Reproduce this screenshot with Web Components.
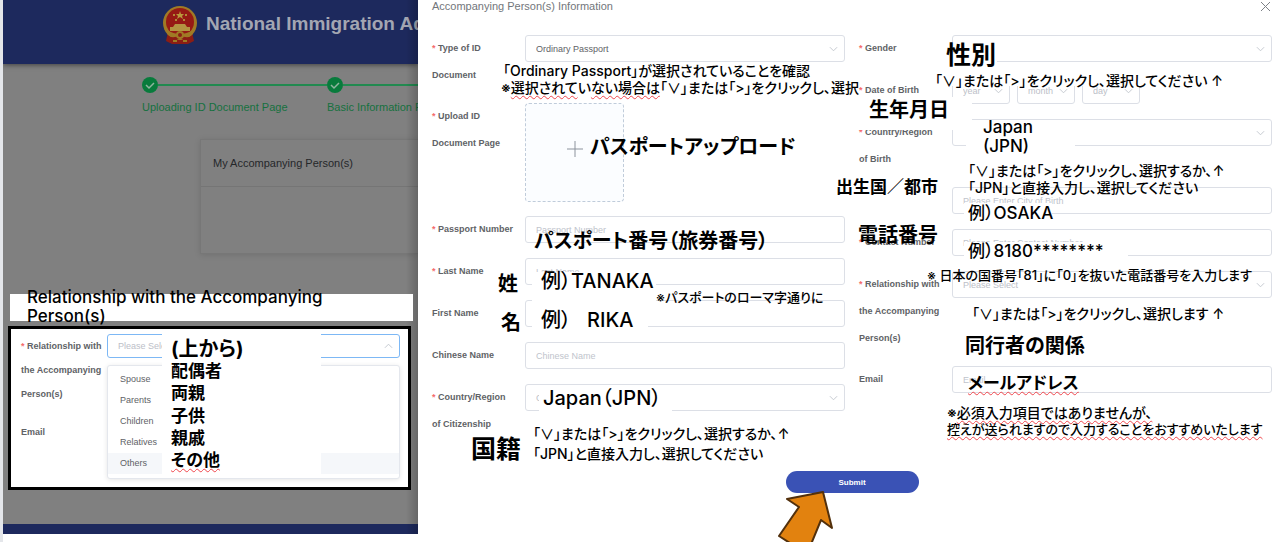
<!DOCTYPE html>
<html lang="ja">
<head>
<meta charset="utf-8">
<title>Accompanying Person(s) Information</title>
<style>
    * { box-sizing: border-box; }
    body {
        margin: 0;
        background: #fff;
        font-family: "Liberation Sans", Arial, sans-serif;
    }
</style>
</head>
<body>
<guide-page></guide-page>

<script>
    const baseStyle = `
        * { box-sizing: border-box; }
        :host { display: block; }
        :host([hidden]) { display: none; }
    `;

    // handwritten style remark laid over the form
    class HandNote extends HTMLElement {
        constructor() {
            super();
            this.attachShadow({ mode: 'open' });
        }
        connectedCallback() {
            this.shadowRoot.innerHTML = `
                <style>
                    ${baseStyle}
                    :host {
                        position: absolute;
                        font-family: Inter, "Noto Sans CJK JP", sans-serif;
                        font-feature-settings: "palt";
                        font-size: 14px;
                        font-weight: 500;
                        line-height: 24px;
                        color: #000;
                        white-space: nowrap;
                    }
                    :host([size="xs"]) { font-size: 13px; }
                    :host([size="m"]) { font-size: 17px; }
                    :host([size="l"]) { font-size: 20px; }
                    :host([size="xl"]) { font-size: 25px; }
                    :host([bold]) { font-weight: 700; }
                    ::slotted(u) {
                        text-decoration: underline wavy #f0464c 1px;
                        text-underline-offset: 2px;
                        text-decoration-skip-ink: none;
                    }
                </style>
                <slot></slot>
            `;
        }
    }
    customElements.define('hand-note', HandNote);

    // white box that hides what is under a remark
    class NotePatch extends HTMLElement {
        constructor() {
            super();
            this.attachShadow({ mode: 'open' });
            this.shadowRoot.innerHTML = `
                <style>
                    :host { display: block; position: absolute; background: #fff; }
                </style>
            `;
        }
    }
    customElements.define('note-patch', NotePatch);

    class FormField extends HTMLElement {
        constructor() {
            super();
            this.attachShadow({ mode: 'open' });
        }
        connectedCallback() {
            const label = this.getAttribute('label');
            const type = this.getAttribute('type') || 'text';
            const hint = this.getAttribute('hint') || '';
            const value = this.getAttribute('value') || '';
            const star = this.hasAttribute('required') ? '<i>*</i> ' : '';
            const arrow = '<svg viewBox="0 0 10 6"><path d="M1 1l4 4 4-4"/></svg>';
            let control = '';

            if (type === 'select') {
                control = `
                    <div class="box">
                        <select id="ctl" class="${value ? 'filled' : ''}"><option>${value || hint}</option></select>
                        ${arrow}
                    </div>`;
            } else if (type === 'date') {
                control = '<div class="dates">' + ['year', 'month', 'day'].map((part, i) => `
                    <div class="box">
                        <select ${i === 0 ? 'id="ctl"' : ''} aria-label="${part}"><option>${part}</option></select>
                        ${arrow}
                    </div>`).join('') + '</div>';
            } else if (type === 'upload') {
                control = `
                    <button id="ctl" class="upload" type="button" aria-label="Upload">
                        <svg viewBox="0 0 16 16"><path d="M8 0v16M0 8h16"/></svg>
                    </button>`;
            } else {
                control = `<input id="ctl" type="text" placeholder="${hint}">`;
            }

            this.shadowRoot.innerHTML = `
                <style>
                    ${baseStyle}
                    :host {
                        display: grid;
                        grid-template-columns: var(--label-width, 93px) minmax(0, 1fr);
                        min-height: 28px;
                        align-items: start;
                    }
                    label {
                        font-size: 9px;
                        font-weight: 700;
                        line-height: var(--label-line, 27px);
                        color: #606266;
                        white-space: pre-line;
                    }
                    i { color: #f56c6c; font-style: normal; }
                    input, select {
                        display: block;
                        width: 100%;
                        height: var(--control-height, 27px);
                        padding: 0 10px;
                        font: 9px "Liberation Sans", Arial, sans-serif;
                        color: #606266;
                        background: #fff;
                        border: 1px solid var(--control-border, #dcdfe6);
                        border-radius: 3px;
                        outline: none;
                        appearance: none;
                    }
                    select { color: #bcc0c8; }
                    select.filled { color: #606266; }
                    ::placeholder { color: #c0c4cc; }
                    .box { position: relative; }
                    .box svg {
                        position: absolute;
                        right: 7px;
                        top: calc(50% - 3px);
                        width: 9px;
                        height: 6px;
                        transform: var(--arrow-turn, none);
                    }
                    svg path { fill: none; stroke: #c0c4cc; }
                    .dates {
                        display: grid;
                        grid-template-columns: repeat(3, 58px);
                        gap: 7px;
                    }
                    .upload {
                        display: grid;
                        place-items: center;
                        width: 99px;
                        height: 99px;
                        padding: 0 0 8px;
                        background: #fbfdff;
                        border: 1px dashed #c0ccda;
                        border-radius: 4px;
                    }
                    .upload svg { width: 16px; height: 16px; }
                    .upload path { stroke: #8c939d; }
                </style>
                <label for="ctl">${star}${label}</label>
                ${control}
            `;
        }
    }
    customElements.define('form-field', FormField);

    // the dimmed page behind the drawer
    class SitePage extends HTMLElement {
        constructor() {
            super();
            this.attachShadow({ mode: 'open' });
        }
        connectedCallback() {
            const tick = '<svg class="tick" viewBox="0 0 16 16"><circle cx="8" cy="8" r="8"/><path d="M4 8l3 3 5-5"/></svg>';
            this.shadowRoot.innerHTML = `
                <style>
                    ${baseStyle}
                    :host {
                        display: flex;
                        flex-direction: column;
                        min-height: 534px;
                        background: #808080;
                        overflow: hidden;
                        position: relative;
                    }
                    :host::after {
                        content: "";
                        position: absolute;
                        inset: 0 0 0 auto;
                        width: 12px;
                        background: linear-gradient(to right, transparent, rgba(0, 0, 0, 0.2));
                    }
                    header {
                        display: flex;
                        align-items: flex-start;
                        gap: 8px;
                        height: 64px;
                        padding: 5px 0 0 159px;
                        background: #1d295d;
                        box-shadow: 0 1px 5px rgba(0, 0, 0, 0.5);
                        white-space: nowrap;
                    }
                    header svg { width: 36px; height: 39px; flex: none; }
                    h1 {
                        margin: 0;
                        font-size: 19px;
                        line-height: 38px;
                        color: #a3a6b2;
                    }
                    ol {
                        display: flex;
                        margin: 0;
                        padding: 13px 0 0 139px;
                        list-style: none;
                    }
                    li {
                        flex: 0 0 185px;
                        font-size: 11px;
                        line-height: 16px;
                        color: #16713f;
                        white-space: nowrap;
                    }
                    .bar { display: flex; align-items: center; margin-bottom: 6px; }
                    .bar::after { content: ""; flex: 1; height: 2px; background: #228a50; }
                    .tick { width: 16px; height: 16px; }
                    .tick circle { fill: #087b3c; }
                    .tick path { fill: none; stroke: #8fb59f; stroke-width: 1.5; }
                    section {
                        margin: 24px 0 0 197px;
                        height: 115px;
                        border: 1px solid #777;
                        border-right: 0;
                        box-shadow: 0 1px 6px rgba(0, 0, 0, 0.12);
                    }
                    h2 {
                        margin: 0;
                        padding: 0 12px;
                        font-size: 11px;
                        font-weight: 400;
                        line-height: 46px;
                        color: #25272a;
                        border-bottom: 1px solid #757575;
                    }
                    footer { height: 10px; margin-top: auto; background: #1d295d; }
                </style>
                <header>
                    <svg viewBox="0 0 36 39">
                        <path d="M6 27l-2 9 6 3h16l6-3-2-9z" fill="#8c1d14"/>
                        <circle cx="18" cy="18" r="17" fill="#a07a25"/>
                        <circle cx="18" cy="17" r="14" fill="#961a14"/>
                        <path d="M18 6l1 3h3l-2 2 1 3-3-2-3 2 1-3-2-2h3z" fill="#b9993c"/>
                        <path d="M11 9h2v2h-2zM23 9h2v2h-2zM13 14h2v2h-2zM21 14h2v2h-2z" fill="#b08a35"/>
                        <path d="M13 19h10l2 3h3v4H8v-4h3z" fill="#b39441"/>
                        <path d="M5 25q13 8 26 0v4q-13 6-26 0z" fill="#a07a25"/>
                        <path d="M6 31q6 3 12-1 6 4 12 1l-1 5q-6 1-11-3-5 4-11 3z" fill="#8c1d14"/>
                        <circle cx="18" cy="30" r="4" fill="#a07a25"/>
                        <circle cx="18" cy="30" r="2" fill="#8c1d14"/>
                        <path d="M11 35h4v2h-4zM21 35h4v2h-4z" fill="#a07a25"/>
                    </svg>
                    <h1>National Immigration Ad</h1>
                </header>
                <ol>
                    <li><div class="bar">${tick}</div>Uploading ID Document Page</li>
                    <li><div class="bar">${tick}</div>Basic Information F</li>
                </ol>
                <section><h2>My Accompanying Person(s)</h2></section>
                <footer></footer>
            `;
        }
    }
    customElements.define('site-page', SitePage);

    // cut-out that shows the relationship list opened
    class RelationInset extends HTMLElement {
        constructor() {
            super();
            this.attachShadow({ mode: 'open' });
        }
        connectedCallback() {
            const options = ['Spouse', 'Parents', 'Children', 'Relatives', 'Others'];
            this.shadowRoot.innerHTML = `
                <style>
                    ${baseStyle}
                    :host {
                        position: absolute;
                        left: 5px;
                        right: 7px;
                        top: 326px;
                        height: 164px;
                        padding: 5px 8px 0 10px;
                        background: #fff;
                        border: 3px solid #000;
                        --label-width: 86px;
                        --label-line: 24px;
                    }
                    .rel {
                        --control-height: 24px;
                        --control-border: #7db8f5;
                        --arrow-turn: rotate(180deg);
                    }
                    p {
                        margin: 14px 0 0;
                        font-size: 9px;
                        font-weight: 700;
                        line-height: 24px;
                        color: #606266;
                    }
                    ul {
                        position: absolute;
                        left: 96px;
                        right: 8px;
                        top: 36px;
                        margin: 0;
                        padding: 3px 0 4px;
                        list-style: none;
                        background: #fff;
                        border: 1px solid #e4e7ed;
                        border-radius: 3px;
                        box-shadow: 0 1px 5px rgba(0, 0, 0, 0.1);
                    }
                    li {
                        padding: 0 12px;
                        font-size: 9px;
                        line-height: 21px;
                        color: #606266;
                    }
                    li:last-child { background: #f5f7fa; }
                </style>
                <form-field class="rel" type="select" required label="Relationship with
the Accompanying
Person(s)" hint="Please Select"></form-field>
                <p>Email</p>
                <ul>${options.map(o => `<li>${o}</li>`).join('')}</ul>
            `;
        }
    }
    customElements.define('relation-inset', RelationInset);

    class PersonDrawer extends HTMLElement {
        constructor() {
            super();
            this.attachShadow({ mode: 'open' });
        }
        connectedCallback() {
            this.shadowRoot.innerHTML = `
                <style>
                    ${baseStyle}
                    :host {
                        position: relative;
                        padding: 0 8px 0 14px;
                        background: #fff;
                    }
                    header {
                        display: flex;
                        justify-content: space-between;
                        height: 35px;
                        font-size: 11px;
                        line-height: 13px;
                        color: #72767b;
                    }
                    .close {
                        width: 12px;
                        height: 12px;
                        padding: 0;
                        border: 0;
                        background: none;
                    }
                    .close svg { display: block; width: 12px; height: 12px; }
                    .close path { fill: none; stroke: #7d8187; }
                    form {
                        display: grid;
                        grid-template-columns: 1fr 1fr;
                        column-gap: 14px;
                    }
                    .column { display: flex; flex-direction: column; gap: 14px; }
                    .submit {
                        grid-column: 1 / -1;
                        justify-self: center;
                        width: 133px;
                        height: 22px;
                        margin-top: 33px;
                        border: 0;
                        border-radius: 11px;
                        background: #3a52b5;
                        color: #fff;
                        font: 700 8px "Liberation Sans", Arial, sans-serif;
                    }
                </style>
                <header>
                    <span>Accompanying Person(s) Information</span>
                    <button class="close" type="button" aria-label="Close">
                        <svg viewBox="0 0 12 12"><path d="M1 2l9 9M10 2l-9 9"/></svg>
                    </button>
                </header>
                <form>
                    <div class="column">
                        <form-field type="select" required label="Type of ID
Document" value="Ordinary Passport"></form-field>
                        <form-field type="upload" required label="Upload ID
Document Page"></form-field>
                        <form-field required label="Passport Number" hint="Passport Number"></form-field>
                        <form-field required label="Last Name" hint="Last Name"></form-field>
                        <form-field label="First Name"></form-field>
                        <form-field label="Chinese Name" hint="Chinese Name"></form-field>
                        <form-field type="select" required label="Country/Region
of Citizenship" hint="C"></form-field>
                    </div>
                    <div class="column">
                        <form-field type="select" required label="Gender"></form-field>
                        <form-field type="date" required label="Date of Birth"></form-field>
                        <form-field type="select" required label="Country/Region
of Birth"></form-field>
                        <form-field label="" hint="Please Enter City of Birth"></form-field>
                        <form-field required label="Contact Number" hint="Please Enter Contact Number"></form-field>
                        <form-field type="select" required label="Relationship with
the Accompanying
Person(s)" hint="Please Select"></form-field>
                        <form-field label="Email" hint="Email"></form-field>
                    </div>
                    <button class="submit" type="button">Submit</button>
                </form>
                <slot></slot>
            `;
        }
    }
    customElements.define('person-drawer', PersonDrawer);

    class GuidePage extends HTMLElement {
        constructor() {
            super();
            this.attachShadow({ mode: 'open' });
        }
        connectedCallback() {
            this.shadowRoot.innerHTML = `
                <style>
                    ${baseStyle}
                    :host {
                        display: grid;
                        grid-template-columns: 3px minmax(0, 415fr) minmax(0, 862fr);
                        align-items: start;
                        min-height: 100vh;
                    }
                    .edge { align-self: stretch; background: #e4e6ea; }
                    .behind { position: relative; }
                    .pointer {
                        position: absolute;
                        left: 358px;
                        top: 488px;
                        width: 58px;
                        height: 54px;
                    }
                </style>
                <div class="edge"></div>
                <div class="behind">
                    <site-page></site-page>
                    <note-patch style="left:7px;top:294px;width:403px;height:27px"></note-patch>
                    <hand-note size="m" style="left:24px;top:285px">Relationship with the Accompanying</hand-note>
                    <hand-note size="m" style="left:24px;top:304px">Person(s)</hand-note>
                    <relation-inset></relation-inset>
                    <note-patch style="left:159px;top:332px;width:159px;height:142px"></note-patch>
                    <hand-note size="l" bold style="left:168px;top:337px">(上から)</hand-note>
                    <hand-note size="m" bold style="left:168px;top:359px">配偶者</hand-note>
                    <hand-note size="m" bold style="left:168px;top:381px">両親</hand-note>
                    <hand-note size="m" bold style="left:168px;top:404px">子供</hand-note>
                    <hand-note size="m" bold style="left:168px;top:426px">親戚</hand-note>
                    <hand-note size="m" bold style="left:168px;top:448px"><u>その他</u></hand-note>
                </div>
                <person-drawer>
                    <hand-note style="left:85px;top:59px">「Ordinary Passport」が選択されていることを確認</hand-note>
                    <hand-note style="left:83px;top:76px">※<u>選択されて</u>い<u>ない場合は</u>「∨」または「>」をクリックし、選択</hand-note>
                    <hand-note size="l" bold style="left:172px;top:135px">パスポートアップロード</hand-note>
                    <hand-note size="l" bold style="left:116px;top:229px">パスポート番号（旅券番号）</hand-note>
                    <hand-note size="l" bold style="left:80px;top:272px">姓</hand-note>
                    <note-patch style="left:114px;top:272px;width:124px;height:33px"></note-patch>
                    <hand-note size="l" style="left:123px;top:269px">例）TANAKA</hand-note>
                    <hand-note size="xs" style="left:238px;top:285px">※パスポートのローマ字通りに</hand-note>
                    <hand-note size="l" bold style="left:83px;top:311px">名</hand-note>
                    <note-patch style="left:114px;top:305px;width:116px;height:30px"></note-patch>
                    <hand-note size="l" style="left:123px;top:308px">例）&nbsp;&nbsp; RIKA</hand-note>
                    <note-patch style="left:121px;top:386px;width:133px;height:28px"></note-patch>
                    <hand-note size="l" style="left:125px;top:386px">Japan（JPN）</hand-note>
                    <hand-note size="xl" bold style="left:53px;top:437px">国籍</hand-note>
                    <hand-note style="left:115px;top:422px">「∨」または「>」をクリックし、選択するか、↑</hand-note>
                    <hand-note style="left:115px;top:442px">「JPN」と直接入力し、選択してください</hand-note>

                    <note-patch style="left:533px;top:42px;width:46px;height:27px"></note-patch>
                    <hand-note size="xl" bold style="left:528px;top:43px">性別</hand-note>
                    <note-patch style="left:516px;top:72px;width:294px;height:14px"></note-patch>
                    <hand-note style="left:517px;top:69px">「∨」または「>」をクリックし、選択してください ↑</hand-note>
                    <note-patch style="left:440px;top:97px;width:114px;height:33px"></note-patch>
                    <hand-note size="l" bold style="left:451px;top:98px">生年月日</hand-note>
                    <note-patch style="left:548px;top:121px;width:109px;height:34px"></note-patch>
                    <hand-note size="m" style="left:565px;top:115px">Japan</hand-note>
                    <hand-note size="m" style="left:565px;top:134px">(JPN)</hand-note>
                    <hand-note style="left:550px;top:159px">「∨」または「>」をクリックし、選択するか、↑</hand-note>
                    <hand-note style="left:550px;top:176px">「JPN」と直接入力し、選択してください</hand-note>
                    <hand-note size="m" bold style="left:418px;top:175px">出生国／都市</hand-note>
                    <note-patch style="left:546px;top:203px;width:88px;height:20px"></note-patch>
                    <hand-note size="m" style="left:550px;top:201px">例）OSAKA</hand-note>
                    <hand-note size="l" bold style="left:440px;top:223px">電話番号</hand-note>
                    <note-patch style="left:546px;top:242px;width:164px;height:20px"></note-patch>
                    <hand-note size="m" style="left:550px;top:239px">例）8180********</hand-note>
                    <hand-note size="xs" style="left:509px;top:263px">※ 日本の国番号「81」に「0」を抜いた電話番号を入力します</hand-note>
                    <hand-note style="left:554px;top:302px">「∨」または「>」をクリックし、選択します ↑</hand-note>
                    <hand-note size="l" bold style="left:547px;top:334px">同行者の関係</hand-note>
                    <hand-note size="m" bold style="left:550px;top:371px"><u>メールアドレス</u></hand-note>
                    <hand-note style="left:529px;top:401px">※<u>必須入力項目ではありませんが、</u></hand-note>
                    <hand-note size="xs" style="left:529px;top:417px"><u>控えが送られますので入力することをおすすめいたします</u></hand-note>
                    <svg class="pointer" viewBox="0 0 58 54">
                        <path d="M47 4L11 11l12 8L3 48l28 18 14-34 11 8z" fill="#e2820f" stroke="#52300c" stroke-width="2" stroke-linejoin="round"/>
                    </svg>
                </person-drawer>
            `;
        }
    }
    customElements.define('guide-page', GuidePage);
</script>
</body>
</html>
